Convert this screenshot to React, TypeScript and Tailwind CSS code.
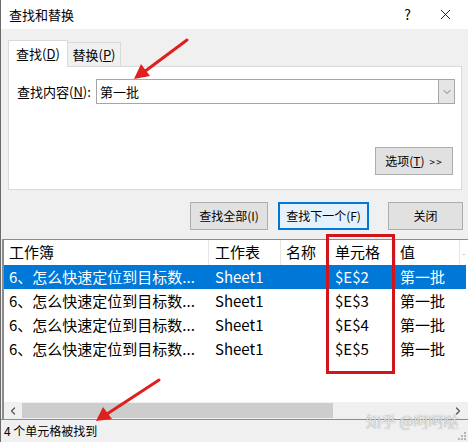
import { X, ChevronDown, ChevronLeft, ChevronRight } from 'lucide-react'

const font = { fontFamily: '"Noto Sans CJK SC", "Noto Sans", sans-serif' }

const rows = ['$E$2', '$E$3', '$E$4', '$E$5']

function Btn({ label, primary, w }: { label: string; primary?: boolean; w: string }) {
  return (
    <div
      className={
        primary
          ? `${w} h-[28px] flex items-center justify-center bg-[#e5f1fb] border-2 border-[#0078d7] text-[12px] text-black`
          : `${w} h-[28px] flex items-center justify-center bg-[#e1e1e1] border border-[#adadad] text-[12px] text-black`
      }
    >
      {label}
    </div>
  )
}

export default function App() {
  return (
    <div
      className="relative w-[468px] h-[442px] bg-[#f0f0f0] border-l border-[#6b6b6b] overflow-hidden flex flex-col text-black"
      style={font}
    >
      {/* title bar */}
      <div className="h-[29px] bg-white flex items-center pl-[8px] shrink-0">
        <span className="text-[13px]">查找和替换</span>
        <span className="ml-auto mr-[26px] text-[14px]">?</span>
        <X className="mr-[14px] size-[17px]" strokeWidth={1.2} />
      </div>

      {/* tabs */}
      <div className="flex items-end h-[37px] pl-[7px] shrink-0">
        <div className="relative z-10 w-[60px] h-[27px] bg-white border border-[#d9d9d9] border-b-0 flex items-center justify-center text-[13px] -mb-px">
          查找(<span className="underline">D</span>)
        </div>
        <div className="w-[53px] h-[24px] bg-[#f0f0f0] border border-[#d9d9d9] border-l-0 border-b-0 flex items-center justify-center text-[13px]">
          替换(<span className="underline">P</span>)
        </div>
      </div>

      {/* panel */}
      <div className="ml-[7px] w-[454px] h-[124px] bg-white border border-[#d9d9d9] flex flex-col shrink-0">
        <div className="flex items-center mt-[12px] pl-[8px]">
          <span className="text-[13px] w-[79px]">
            查找内容(<span className="underline">N</span>):
          </span>
          <div className="w-[359px] h-[25px] border border-[#a6a6a6] flex items-center">
            <span className="pl-[3px] text-[13px] flex-1">第一批</span>
            <div className="w-[16px] h-full bg-[#e5e5e5] border-l border-[#a6a6a6] flex items-center justify-center">
              <ChevronDown className="size-[12px] text-[#555]" strokeWidth={1.5} />
            </div>
          </div>
        </div>
        <div className="flex justify-end mt-[43px] pr-[8px]">
          <div className="w-[78px] h-[28px] bg-[#e1e1e1] border border-[#adadad] flex items-center justify-center text-[12px] gap-[5px]">
            <span>
              选项(<span className="underline">T</span>)
            </span>
            <span className="text-[10px] tracking-[1px]">&gt;&gt;</span>
          </div>
        </div>
      </div>

      {/* buttons */}
      <div className="flex justify-end pr-[5px] mt-[12px] shrink-0">
        <Btn label="查找全部(I)" w="w-[78px]" />
        <div className="w-[10px]" />
        <Btn label="查找下一个(F)" w="w-[91px]" primary />
        <div className="w-[19px]" />
        <Btn label="关闭" w="w-[75px]" />
      </div>

      {/* results list */}
      <div className="mt-[9px] flex-1 bg-white border-t border-l-2 border-[#8c8c8c] ml-[1px] flex flex-col text-[15px]">
        <div className="flex h-[25px] items-center shrink-0">
          <div className="w-[205px] pl-[5px] border-r border-[#e5e5e5] h-full flex items-center">工作簿</div>
          <div className="w-[72px] pl-[6px] border-r border-[#e5e5e5] h-full flex items-center">工作表</div>
          <div className="w-[47px] pl-[5px] border-r border-[#e5e5e5] h-full flex items-center">名称</div>
          <div className="w-[68px] pl-[7px] border-r border-[#e5e5e5] h-full flex items-center">单元格</div>
          <div className="w-[64px] pl-[4px] border-r border-[#e5e5e5] h-full flex items-center">值</div>
          <div className="pl-[2px] text-[#bbb] text-[10px]">-</div>
        </div>
        {rows.map((cell, i) => (
          <div
            key={cell}
            className={
              i === 0
                ? 'flex h-[24px] items-center bg-[#0078d7] text-white mr-[2px] shrink-0'
                : 'flex h-[24px] items-center shrink-0'
            }
          >
            <div className="w-[205px] pl-[5px] whitespace-nowrap">6、怎么快速定位到目标数...</div>
            <div className="w-[72px] pl-[6px]">Sheet1</div>
            <div className="w-[47px]" />
            <div className="w-[68px] pl-[7px]">{cell}</div>
            <div className="w-[64px] pl-[4px]">第一批</div>
          </div>
        ))}
        <div className="flex-1" />
        {/* horizontal scrollbar */}
        <div className="h-[17px] flex items-center bg-[#f0f0f0] shrink-0">
          <ChevronLeft className="size-[12px] ml-[3px] text-[#555]" strokeWidth={2.5} />
          <div className="ml-[3px] w-[311px] h-[15px] bg-[#cdcdcd]" />
          <div className="flex-1" />
          <ChevronRight className="size-[12px] mr-[4px] text-[#555]" strokeWidth={2.5} />
        </div>
      </div>

      {/* status bar */}
      <div className="h-[23px] border-t border-[#8c8c8c] bg-[#f0f0f0] flex items-center pl-[3px] text-[12px] shrink-0 relative">
        <span>4 个单元格被找到</span>
        <span className="absolute left-[365px] -top-[10px] text-[15px] text-[#e6e6e6] [text-shadow:0_0_1px_#8a8a8a]">
          知乎 @呵呵哒
        </span>
        <div className="absolute right-[2px] bottom-[2px] grid grid-cols-3 gap-[1px]">
          <span className="size-[2px]" />
          <span className="size-[2px]" />
          <span className="size-[2px] bg-[#b5b5b5]" />
          <span className="size-[2px]" />
          <span className="size-[2px] bg-[#b5b5b5]" />
          <span className="size-[2px] bg-[#b5b5b5]" />
          <span className="size-[2px] bg-[#b5b5b5]" />
          <span className="size-[2px] bg-[#b5b5b5]" />
          <span className="size-[2px] bg-[#b5b5b5]" />
        </div>
      </div>

      {/* red highlight box */}
      <div className="absolute left-[325px] top-[234px] w-[69px] h-[140px] border-[3px] border-[#d0161b] pointer-events-none" />

      {/* red arrows */}
      <svg className="absolute inset-0 pointer-events-none" width="468" height="442">
        <line x1="186" y1="40" x2="143" y2="72" stroke="#e0201d" strokeWidth="3" strokeLinecap="round" />
        <polygon points="133,79 140,64 149,76" fill="#e0201d" />
        <line x1="158" y1="380" x2="106" y2="414" stroke="#e0201d" strokeWidth="3" strokeLinecap="round" />
        <polygon points="95,421 102,407 111,419" fill="#e0201d" />
      </svg>
    </div>
  )
}
